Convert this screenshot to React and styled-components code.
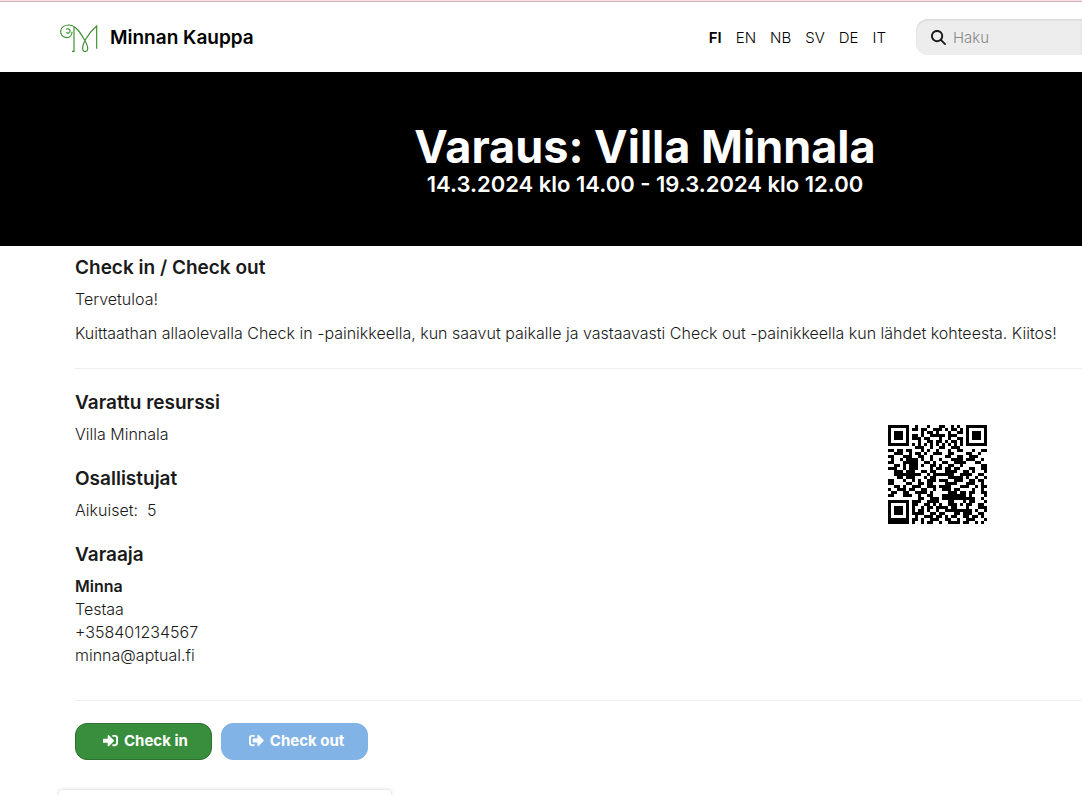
import styled, { createGlobalStyle } from "styled-components";
import { FaSignInAlt, FaSignOutAlt } from "react-icons/fa";
import { FaMagnifyingGlass } from "react-icons/fa6";

const languages = ["FI", "EN", "NB", "SV", "DE", "IT"];

const qrRows = [
  "111111100100010001100101001111111",
  "100000101101100111010110101000001",
  "101110100001011010001001101011101",
  "101110101101001111101110001011101",
  "101110101110110001001001101011101",
  "100000100010011011010110101000001",
  "111111101010101010101010101111111",
  "000000000111001001100111000000000",
  "110110110001010010001001100010011",
  "001110010110100111001100001100100",
  "110001110011001000011001100111000",
  "010010111101001001000111101110010",
  "110001111100110100110011110001100",
  "001101011101001101001100100000011",
  "111001011100001011011011000110011",
  "001110111001101100011110011010001",
  "001111111110010111111100111100110",
  "000110111000101100001111101001001",
  "110001001010011101110011100110110",
  "110000110011011000011110001110010",
  "001101001110011101111000111001011",
  "100111011001100100111011000010010",
  "011001100111101000001110110110011",
  "110001110010011000111111110100001",
  "000000000011001110111111111110010",
  "111111101110011110001100010110001",
  "100000101100110101001110101100110",
  "101110101001011011110110001000111",
  "101110101011010010011111111101001",
  "101110101111001101100011011100110",
  "100000100100111011010110011011010",
  "111111101101001110011001001110001",
  "111111101001011001001111011001010",
];

function Logo() {
  return (
    <svg width="39" height="29" viewBox="29 70 117 87" fill="none" aria-hidden="true">
      <path
        d="M48 98c4 5 12 2 11-5c-1-6-8-7-12-4"
        stroke="#3a8f2e"
        strokeWidth="3.5"
      />
      <path
        d="M65 96c0 11-7 18-16 18c-11 0-19-9-18-20c1-12 13-19 26-18c20 2 32 22 44 42c6 10 12 20 11 30c-1 10-14 10-15 0c-1-10 4-20 9-29c8-14 19-28 33-40v68M71 80v75h-6"
        stroke="#3a8f2e"
        strokeWidth="3.5"
      />
    </svg>
  );
}

function QrCode() {
  const path = qrRows
    .flatMap((row, y) =>
      [...row].map((cell, x) => (cell === "1" ? `M${x} ${y}h1v1h-1z` : ""))
    )
    .join("");

  return (
    <svg
      width="99"
      height="99"
      viewBox="0 0 33 33"
      shapeRendering="crispEdges"
      role="img"
      aria-label="QR"
    >
      <path d={path} />
    </svg>
  );
}

export default function App() {
  return (
    <>
      <GlobalStyle />
      <Header>
        <Brand href="#">
          <Logo />
          Minnan Kauppa
        </Brand>
        <Languages>
          {languages.map((lang) => (
            <Language key={lang} href="#" $active={lang === "FI"}>
              {lang}
            </Language>
          ))}
        </Languages>
        <Search>
          <FaMagnifyingGlass />
          <input type="search" placeholder="Haku" aria-label="Haku" />
        </Search>
      </Header>
      <Hero>
        <h1>Varaus: Villa Minnala</h1>
        <p>14.3.2024 klo 14.00 - 19.3.2024 klo 12.00</p>
      </Hero>
      <Main>
        <Intro>
          <Heading>Check in / Check out</Heading>
          <Text>Tervetuloa!</Text>
          <Text>
            Kuittaathan allaolevalla Check in -painikkeella, kun saavut paikalle
            ja vastaavasti Check out -painikkeella kun lähdet kohteesta. Kiitos!
          </Text>
        </Intro>
        <Details>
          <div>
            <Heading>Varattu resurssi</Heading>
            <Text>Villa Minnala</Text>
            <Heading>Osallistujat</Heading>
            <Text>Aikuiset: &nbsp;5</Text>
            <Heading>Varaaja</Heading>
            <Text>
              <strong>Minna</strong>
              <br />
              Testaa
              <br />
              +358401234567
              <br />
              minna@aptual.fi
            </Text>
          </div>
          <QrCode />
        </Details>
        <Actions>
          <Button type="button">
            <FaSignInAlt />
            Check in
          </Button>
          <Button type="button" disabled>
            <FaSignOutAlt />
            Check out
          </Button>
        </Actions>
      </Main>
      <Card />
    </>
  );
}

//Styles
const GlobalStyle = createGlobalStyle`
  * {
    box-sizing: border-box;
  }
  body {
    margin: 0;
    overflow-x: hidden;
    background: #fff;
    color: #1a1a1a;
    font-family: Inter, "Liberation Sans", sans-serif;
    font-size: 16px;
    font-weight: 300;
    line-height: 23px;
  }
  h1, h2, p {
    margin: 0;
  }
`;

const Header = styled.header`
  display: flex;
  align-items: center;
  height: 72px;
  padding: 1px 0 0 60px;
  border-top: 1px solid #ffdfe3;
  box-shadow: inset 0 1px #d6b4b8;
`;

const Brand = styled.a`
  display: flex;
  align-items: center;
  gap: 11px;
  margin-right: auto;
  color: #000;
  font-size: 19px;
  font-weight: 600;
  text-decoration: none;
`;

const Languages = styled.nav`
  display: flex;
  gap: 14px;
  margin-right: 30px;
  font-size: 15px;
`;

const Language = styled.a`
  color: #000;
  font-weight: ${({ $active }) => ($active ? 600 : 300)};
  text-decoration: none;
`;

const Search = styled.label`
  display: flex;
  align-items: center;
  gap: 7px;
  width: 166px;
  height: 36px;
  padding-left: 15px;
  border-radius: 12px 0 0 12px;
  background: #ededed;
  box-shadow: inset 0 1px 2px rgba(0, 0, 0, 0.12);
  font-size: 15px;

  svg {
    flex: none;
  }

  input {
    min-width: 0;
    padding: 0;
    border: 0;
    outline: 0;
    background: none;
    font: inherit;
  }

  input::placeholder {
    color: #888;
  }
`;

const Hero = styled.section`
  padding: 50px 0 50px 208px;
  background: #000;
  color: #fff;
  font-weight: 600;
  text-align: center;

  h1 {
    font-size: 45px;
    font-weight: 700;
    line-height: 50px;
  }

  p {
    font-size: 22px;
    line-height: 24px;
  }
`;

const Main = styled.main`
  padding: 10px 0 30px 75px;
`;

const Heading = styled.h2`
  margin-bottom: 9px;
  font-size: 19px;
  font-weight: 600;
  line-height: 23px;
`;

const Text = styled.p`
  strong {
    font-weight: 600;
  }

  & + & {
    margin-top: 11px;
  }

  & + ${Heading} {
    margin-top: 21px;
  }
`;

const Intro = styled.section`
  padding-bottom: 23px;
  border-bottom: 1px solid #eee;
`;

const Details = styled.section`
  display: flex;
  align-items: flex-start;
  justify-content: space-between;
  padding: 22px 95px 33px 0;
  border-bottom: 1px solid #eee;

  > svg {
    margin-top: 34px;
  }
`;

const Actions = styled.div`
  display: flex;
  gap: 9px;
  padding-top: 22px;
`;

const Button = styled.button`
  display: flex;
  align-items: center;
  gap: 6px;
  height: 37px;
  padding: 0 23px 2px 27px;
  border: 1px solid #2d702f;
  border-radius: 12px;
  background: #388e3c;
  color: #fff;
  font: inherit;
  font-size: 15px;
  font-weight: 700;

  &:disabled {
    border-color: #82b3e6;
    background: #82b3e6;
  }
`;

const Card = styled.div`
  width: 332px;
  height: 40px;
  margin: 0 0 -34px 59px;
  border-radius: 4px;
  background: #fff;
  box-shadow: 0 0 4px rgba(0, 0, 0, 0.2);
`;
